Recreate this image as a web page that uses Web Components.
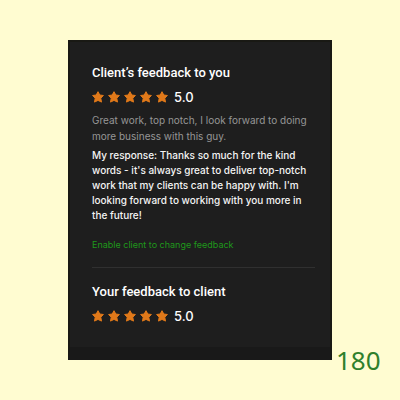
<!DOCTYPE html>
<html lang="en">
<head>
<meta charset="utf-8">
<meta name="viewport" content="width=device-width">
<title>Feedback</title>
<style>
  body { margin: 0; min-height: 100vh; background: #fffcd1; font-family: Inter, "Liberation Sans", sans-serif; }
</style>
</head>
<body>
<feedback-page>
  <feedback-card>
    <feedback-section heading="Client’s feedback to you" score="5.0">
      <feedback-quote>Great work, top notch, I look forward to doing more business with this guy.</feedback-quote>
      <feedback-response>My response: Thanks so much for the kind words - it's always great to deliver top-notch work that my clients can be happy with. I'm looking forward to working with you more in the future!</feedback-response>
      <feedback-action>Enable client to change feedback</feedback-action>
    </feedback-section>
    <feedback-section divided heading="Your feedback to client" score="5.0"></feedback-section>
  </feedback-card>
  <page-count slot="count">180</page-count>
</feedback-page>
<script>
const define = (name, html, setup) => {
  const template = document.createElement('template');
  template.innerHTML = html;
  customElements.define(name, class extends HTMLElement {
    constructor() {
      super();
      this.attachShadow({ mode: 'open' }).append(template.content.cloneNode(true));
    }
    connectedCallback() { if (setup) setup(this, this.shadowRoot); }
  });
};

define('feedback-page', `
  <style>
    :host { display: block; }
    main { display: grid; grid-template-columns: 17% minmax(0, 1fr) 17%; align-items: end; padding-top: 40px; }
    .card { grid-column: 2; padding-bottom: 16px; }
  </style>
  <main><div class="card"><slot></slot></div><slot name="count"></slot></main>`);

define('feedback-card', `
  <style>
    :host { display: block; background: #1e1e1e; color: #fff; border: 2px solid #191914; border-bottom: 13px solid #191919; padding: 21px 15px 20px 22px; }
  </style>
  <slot></slot>`);

define('feedback-section', `
  <style>
    :host { display: block; }
    :host([divided]) { margin-top: 14px; padding-top: 14px; border-top: 1px solid #303030; }
    h2 { margin: 0 0 4px; font-family: Roboto, "Liberation Sans", sans-serif; font-size: 13px; line-height: 20px; font-weight: 500; }
  </style>
  <h2></h2><star-rating></star-rating><slot></slot>`,
  (host, root) => {
    root.querySelector('h2').textContent = host.getAttribute('heading');
    root.querySelector('star-rating').setAttribute('score', host.getAttribute('score'));
  });

define('star-rating', `
  <style>
    :host { display: flex; align-items: center; gap: 6px; padding-bottom: 1px; font-size: 13px; line-height: 20px; font-weight: 500; }
    .stars { display: flex; gap: 4px; }
    svg { width: 12px; height: 12px; fill: #e0791a; stroke: #e0791a; stroke-width: 1; stroke-linejoin: round; }
  </style>
  <span class="stars" role="img"></span><span class="score"></span>`,
  (host, root) => {
    const score = host.getAttribute('score');
    const stars = root.querySelector('.stars');
    stars.setAttribute('aria-label', score + ' out of 5 stars');
    stars.innerHTML = '<svg viewBox="0 0 12 12" aria-hidden="true"><path d="M6 .7 7.8 4 11.4 4.5 8.8 7.2 9.5 11.1 6 9.4 2.5 11.1 3.2 7.2 .6 4.5 4.2 4Z"/></svg>'.repeat(Math.round(score));
    root.querySelector('.score').textContent = score;
  });

define('feedback-quote', `
  <style>
    :host { display: block; margin-top: 4px; color: #969696; font-size: 10px; line-height: 16px; }
    p { margin: 0; }
  </style>
  <p><slot></slot></p>`);

define('feedback-response', `
  <style>
    :host { display: block; margin-top: 4px; color: #f4f4f4; font-size: 10px; line-height: 15px; font-weight: 500; }
    p { margin: 0; }
  </style>
  <p><slot></slot></p>`);

define('feedback-action', `
  <style>
    :host { display: block; margin-top: 14px; }
    button { display: block; border: 0; padding: 0; background: none; color: #1f981b; font: inherit; font-size: 9px; line-height: 16px; cursor: pointer; }
  </style>
  <button type="button"><slot></slot></button>`);

define('page-count', `
  <style>
    :host { display: block; padding-left: 4px; color: #2f802c; font-family: "Noto Sans", "Open Sans", sans-serif; font-size: 26px; line-height: 32px; }
  </style>
  <slot></slot>`);
</script>
</body>
</html>
